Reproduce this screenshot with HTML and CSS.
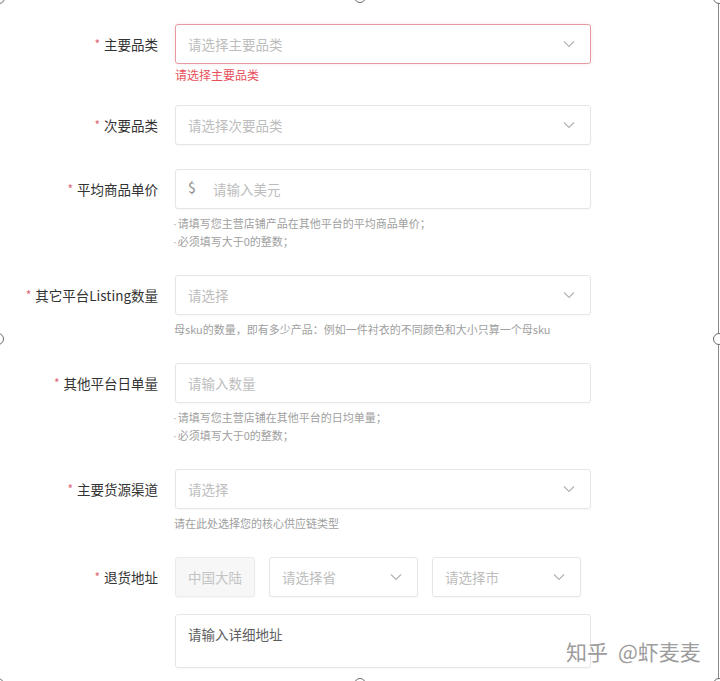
FILE: index.html
```html
<!DOCTYPE html>
<html lang="zh-CN">
<head>
<meta charset="utf-8">
<title>店铺信息</title>
<link rel="stylesheet" href="styles.css">
</head>
<body>
<div class="frame">
  <form class="form">
    <div class="item item-err">
      <label class="label"><span class="req">*</span>主要品类</label>
      <div class="control">
        <div class="field select invalid">
          <span class="ph">请选择主要品类</span>
          <svg class="chev" width="12" height="8" viewBox="0 0 12 8"><path d="M1 1.5 L6 6.5 L11 1.5" fill="none" stroke="#b4b4b4" stroke-width="1.2"/></svg>
        </div>
        <div class="err">请选择主要品类</div>
      </div>
    </div>

    <div class="item item-tight">
      <label class="label"><span class="req">*</span>次要品类</label>
      <div class="control">
        <div class="field select">
          <span class="ph">请选择次要品类</span>
          <svg class="chev" width="12" height="8" viewBox="0 0 12 8"><path d="M1 1.5 L6 6.5 L11 1.5" fill="none" stroke="#b4b4b4" stroke-width="1.2"/></svg>
        </div>
      </div>
    </div>

    <div class="item">
      <label class="label"><span class="req">*</span>平均商品单价</label>
      <div class="control">
        <div class="field">
          <span class="prefix">$</span>
          <span class="ph">请输入美元</span>
        </div>
        <div class="hint">
          <div class="hint-line"><span class="dot">·</span>请填写您主营店铺产品在其他平台的平均商品单价；</div>
          <div class="hint-line"><span class="dot">·</span>必须填写大于0的整数；</div>
        </div>
      </div>
    </div>

    <div class="item">
      <label class="label"><span class="req">*</span>其它平台Listing数量</label>
      <div class="control">
        <div class="field select">
          <span class="ph">请选择</span>
          <svg class="chev" width="12" height="8" viewBox="0 0 12 8"><path d="M1 1.5 L6 6.5 L11 1.5" fill="none" stroke="#b4b4b4" stroke-width="1.2"/></svg>
        </div>
        <div class="hint hint-plain">
          <div class="hint-line">母sku的数量，即有多少产品：例如一件衬衣的不同颜色和大小只算一个母sku</div>
        </div>
      </div>
    </div>

    <div class="item">
      <label class="label"><span class="req">*</span>其他平台日单量</label>
      <div class="control">
        <div class="field">
          <span class="ph">请输入数量</span>
        </div>
        <div class="hint">
          <div class="hint-line"><span class="dot">·</span>请填写您主营店铺在其他平台的日均单量；</div>
          <div class="hint-line"><span class="dot">·</span>必须填写大于0的整数；</div>
        </div>
      </div>
    </div>

    <div class="item">
      <label class="label"><span class="req">*</span>主要货源渠道</label>
      <div class="control">
        <div class="field select">
          <span class="ph">请选择</span>
          <svg class="chev" width="12" height="8" viewBox="0 0 12 8"><path d="M1 1.5 L6 6.5 L11 1.5" fill="none" stroke="#b4b4b4" stroke-width="1.2"/></svg>
        </div>
        <div class="hint hint-plain">
          <div class="hint-line">请在此处选择您的核心供应链类型</div>
        </div>
      </div>
    </div>

    <div class="item">
      <label class="label"><span class="req">*</span>退货地址</label>
      <div class="control">
        <div class="addr">
          <div class="field country"><span class="ph">中国大陆</span></div>
          <div class="field select region">
            <span class="ph">请选择省</span>
            <svg class="chev" width="12" height="8" viewBox="0 0 12 8"><path d="M1 1.5 L6 6.5 L11 1.5" fill="none" stroke="#b4b4b4" stroke-width="1.2"/></svg>
          </div>
          <div class="field select region">
            <span class="ph">请选择市</span>
            <svg class="chev" width="12" height="8" viewBox="0 0 12 8"><path d="M1 1.5 L6 6.5 L11 1.5" fill="none" stroke="#b4b4b4" stroke-width="1.2"/></svg>
          </div>
        </div>
        <div class="textarea"><span class="ta-ph">请输入详细地址</span></div>
      </div>
    </div>
  </form>

  <div class="watermark"><span>知乎</span><span>@虾麦麦</span></div>

  <span class="handle h-tl"></span>
  <span class="handle h-tm"></span>
  <span class="handle h-tr"></span>
  <span class="handle h-ml"></span>
  <span class="handle h-mr"></span>
  <span class="handle h-bl"></span>
  <span class="handle h-bm"></span>
  <span class="handle h-br"></span>
</div>
</body>
</html>
```

FILE: styles.css
```css
* { box-sizing: border-box; }

html, body {
  margin: 0;
  padding: 0;
  background: #ffffff;
}

body {
  width: 720px;
  height: 681px;
  overflow: hidden;
  font-family: "Noto Sans CJK SC", "Noto Sans", sans-serif;
  color: #333333;
}

.frame {
  position: relative;
  width: 719px;
  height: 681px;
  border-right: 1px solid #8a8a8a;
}

.form {
  padding-top: 24px;
  display: flex;
  flex-direction: column;
}

.item {
  display: flex;
  align-items: flex-start;
  margin-bottom: 25px;
}

.item-tight {
  margin-bottom: 23px;
}

.label {
  width: 158px;
  flex: none;
  margin-right: 17px;
  text-align: right;
  font-size: 13.5px;
  line-height: 40px;
  color: #333333;
  white-space: nowrap;
}

.req {
  color: #e0677a;
  font-size: 12px;
  margin-right: 4px;
  position: relative;
  top: -1px;
}

.control {
  width: 416px;
  display: flex;
  flex-direction: column;
}

.field {
  height: 40px;
  border: 1px solid #e6e6e6;
  border-radius: 3px;
  background: #ffffff;
  display: flex;
  align-items: center;
  padding: 0 15px 0 12px;
  font-size: 13.5px;
  box-shadow: 0 1px 2px rgba(0, 0, 0, 0.035);
}

.field.select {
  justify-content: space-between;
}

.field.invalid {
  border-color: #e89aa2;
  box-shadow: 0 0 4px rgba(232, 120, 130, 0.18);
}

.ph {
  color: #bdbdbd;
  white-space: nowrap;
}

.prefix {
  color: #8a8a8a;
  font-size: 14px;
  width: 25px;
  flex: none;
  position: relative;
  top: -2px;
}

.chev {
  flex: none;
  display: block;
}

.err {
  height: 16px;
  margin-top: 4px;
  margin-bottom: -4px;
  font-size: 12px;
  line-height: 14px;
  color: #e8515c;
  white-space: nowrap;
}

.hint {
  margin-top: 5px;
  margin-left: -2px;
  font-size: 11px;
  color: #a0a0a0;
  white-space: nowrap;
}

.hint-line {
  height: 18px;
  line-height: 18px;
  overflow: visible;
}

.dot {
  font-family: "Liberation Sans", sans-serif;
  margin-right: 1px;
}

.hint-plain {
  margin-left: -1px;
}

.addr {
  display: flex;
  gap: 14px;
}

.field.country {
  width: 80px;
  flex: none;
  background: #f7f7f7;
  border-color: #ebebeb;
  padding: 0 12px;
}

.field.country .ph {
  color: #c4c4c4;
}

.field.region {
  width: 149px;
  flex: none;
}

.textarea {
  margin-top: 17px;
  height: 54px;
  border: 1px solid #e6e6e6;
  border-radius: 3px;
  padding: 9px 12px;
  font-size: 13.5px;
  line-height: 20px;
  box-shadow: 0 1px 2px rgba(0, 0, 0, 0.035);
}

.ta-ph {
  color: #5e5e5e;
}

.watermark {
  position: absolute;
  left: 566px;
  top: 636px;
  display: flex;
  gap: 10px;
  font-size: 21px;
  line-height: 30px;
  color: #9c9c9c;
  text-shadow: 0 0 2px #ffffff, 0 0 2px #ffffff, 1px 1px 1px rgba(255, 255, 255, 0.9);
  white-space: nowrap;
}

.handle {
  position: absolute;
  width: 12px;
  height: 12px;
  margin: -6px 0 0 -6px;
  border: 1px solid #6a6a6a;
  border-radius: 50%;
  background: #ffffff;
}

.h-tl { left: -1px; top: -2px; }
.h-tm { left: 360px; top: -3px; }
.h-tr { left: 719px; top: -2px; }
.h-ml { left: -2px; top: 339px; }
.h-mr { left: 719px; top: 339px; }
.h-bl { left: -2px; top: 684px; }
.h-bm { left: 360px; top: 684px; }
.h-br { left: 719px; top: 684px; }
```
